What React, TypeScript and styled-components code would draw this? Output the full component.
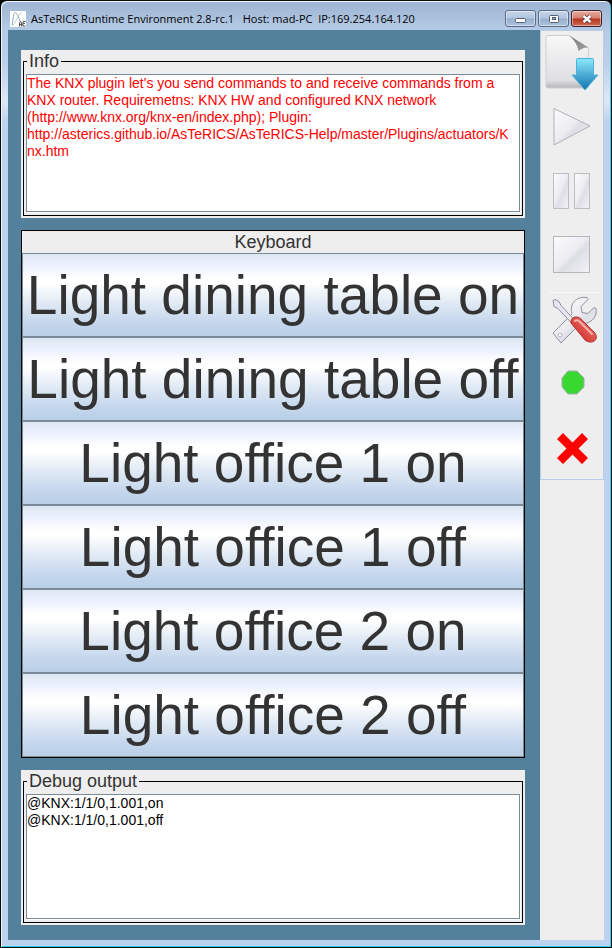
import React from "react";
import styled, { createGlobalStyle } from "styled-components";

const GlobalStyle = createGlobalStyle`
  *, *::before, *::after { box-sizing: border-box; }
  body { margin: 0; background: #000; font-family: "Liberation Sans", Arial, sans-serif; }
`;

const WindowFrame = styled.div`
  display: flex;
  flex-direction: column;
  min-height: 100vh;
  border: 1px solid #0a0a0a;
  border-radius: 7px 7px 0 0;
  background: linear-gradient(#9db4d2 0, #b5cbe6 30px, #b9cfea 60px, #dce8f6 100px, #bdd2ee 122px, #bdd2ee 100%);
  box-shadow: inset 1px 1px 0 #eef4fb, inset -1px -1px 0 #22d3ee;
  padding: 0 7px 7px;
`;

const TitleBar = styled.header`
  display: flex;
  align-items: center;
  height: 29px;
  padding: 6px 0 0 2px;
`;

const Title = styled.h1`
  flex: 1;
  margin: 0 0 0 5px;
  font: 400 11px/18px "Open Sans", "Noto Sans", sans-serif;
  color: #000;
  white-space: pre;
`;

const WindowControls = styled.div`
  display: flex;
  gap: 2px;
  margin-right: 2px;
`;

const WindowButton = styled.button<{ $close?: boolean }>`
  display: flex;
  align-items: center;
  justify-content: center;
  width: 31px;
  height: 17px;
  padding: 0;
  border: 1px solid ${(p) => (p.$close ? "#43202a" : "#5b6b87")};
  border-radius: 3px;
  background: ${(p) =>
    p.$close
      ? "linear-gradient(#e6aca0 0, #d6806f 48%, #b9341f 52%, #cc6a50 100%)"
      : "linear-gradient(#c5d5e9 0, #b2c5df 48%, #97aecd 52%, #adc4e0 100%)"};
  box-shadow: inset 0 0 0 1px rgba(255, 255, 255, 0.45);
`;

const Client = styled.div`
  display: flex;
  flex: 1;
`;

const Desktop = styled.main`
  display: flex;
  flex: 1;
  flex-direction: column;
  gap: 12px;
  min-width: 0;
  padding: 20px 15px 15px 13px;
  background: #53819b;
`;

const Panel = styled.section`
  padding: 1px 2px 2px;
  background: #eee;
`;

const Group = styled.fieldset`
  min-width: 0;
  margin: 0;
  padding: 2px 2px 3px;
  border: 1px solid #000;
`;

const Legend = styled.legend`
  margin-left: 1px;
  padding: 0 2px;
  font-size: 18px;
  line-height: 21px;
  color: #333;
`;

const Output = styled.textarea<{ $color: string; $height: number }>`
  display: block;
  width: 100%;
  height: ${(p) => p.$height}px;
  padding: 0 4px 0 0;
  border: 1px solid #7a8a99;
  outline: 0;
  resize: none;
  overflow: hidden;
  background: #fff;
  box-shadow: 1px 1px 0 #fff;
  font: 14px/17px "Liberation Sans", Arial, sans-serif;
  color: ${(p) => p.$color};
`;

const Keyboard = styled.section`
  display: flex;
  flex: 1;
  flex-direction: column;
  border: 1px solid #000;
  background: #eee;
`;

const KeyboardTitle = styled.h2`
  margin: 0;
  font-size: 18px;
  font-weight: 400;
  line-height: 22px;
  text-align: center;
  color: #333;
`;

const Key = styled.button`
  flex: 1;
  padding: 0;
  border: 1px solid #7a8a99;
  background: linear-gradient(#dde8f3 0, #edf2fd 16%, #fff 30%, #fff 36%, #dde8f3 62%, #c4d6ec 85%, #b8cfe5 100%);
  font: 55px/64px "Liberation Sans", Arial, sans-serif;
  white-space: nowrap;
  color: #333;
`;

const Sidebar = styled.aside`
  width: 64px;
  background: #eee;
`;

const Toolbar = styled.div`
  display: flex;
  flex-direction: column;
  border: 1px solid #b8cfe5;
`;

const ToolButton = styled.button`
  display: flex;
  align-items: center;
  justify-content: center;
  height: 64px;
  padding: 0;
  border: 0;
  background: transparent;
`;

const unbroken = (url: string) => url.replace(/-/g, "-\u2060");

const INFO =
  "The KNX plugin let's you send commands to and receive commands from a KNX router. Requiremetns: KNX HW and configured KNX network (http://www.knx.org/knx-en/index.php); Plugin: " +
  unbroken("http://asterics.github.io/AsTeRICS/AsTeRICS-Help/master/Plugins/actuators/Knx.htm");

const DEBUG = "@KNX:1/1/0,1.001,on\n@KNX:1/1/0,1.001,off";

const KEYS = [
  "Light dining table on",
  "Light dining table off",
  "Light office 1 on",
  "Light office 1 off",
  "Light office 2 on",
  "Light office 2 off",
];

const AppLogo = () => (
  <svg width="16" height="16" viewBox="0 0 16 16" aria-hidden="true">
    <rect width="16" height="16" fill="#fff" />
    <path d="M2 14.500C3 8 3.500 1.500 5.500 1.500S8.500 9 13 15" fill="none" stroke="#8fa6ac" />
    <path d="M3 14C7 11 7 4 12 1.500" fill="none" stroke="#b4d3dc" />
    <path d="M9.500 15.500v-4l1-1 1 1v4M9.500 13.500h2M15.500 10.500h-2.500v4.500h2.500M13 12.500h2" fill="none" stroke="#555" />
  </svg>
);

const ToolSvg = ({ children }: { children: React.ReactNode }) => (
  <svg width="62" height="64" viewBox="0 0 62 64" aria-hidden="true">
    <defs>
      <linearGradient id="silver" x1="0" y1="0" x2="1" y2="1">
        <stop offset="0" stopColor="#fcfcfe" />
        <stop offset=".48" stopColor="#ececf1" />
        <stop offset=".58" stopColor="#dedee6" />
        <stop offset="1" stopColor="#f2f2f6" />
      </linearGradient>
      <linearGradient id="page" x1="0" y1="0" x2="0" y2="1">
        <stop offset="0" stopColor="#f8f8f8" />
        <stop offset=".85" stopColor="#e0e0e3" />
        <stop offset="1" stopColor="#b4b4b8" />
      </linearGradient>
      <linearGradient id="fold" x1="0" y1="0" x2="1" y2="1">
        <stop offset="0" stopColor="#777" />
        <stop offset="1" stopColor="#a4a4a6" />
      </linearGradient>
      <linearGradient id="arrow" x1="0" y1="0" x2="0" y2="1">
        <stop offset="0" stopColor="#8be9fd" />
        <stop offset="1" stopColor="#1173ae" />
      </linearGradient>
      <linearGradient id="red" x1="0" y1="1" x2="1" y2="0">
        <stop offset="0" stopColor="#c91b1b" />
        <stop offset="1" stopColor="#f08578" />
      </linearGradient>
    </defs>
    {children}
  </svg>
);

const TOOLS: { label: string; icon: React.ReactNode }[] = [
  {
    label: "Open model",
    icon: (
      <>
        <path d="M7 4.500h21L47.500 17V55q0 2-2 2H7q-2 0-2-2V6.500q0-2 2-2z" fill="url(#page)" stroke="#d0d0d3" />
        <path d="M28 4.500L47.500 16.500Q42 16 37.500 20 36 11 28 4.500z" fill="url(#fold)" />
        <path d="M35.500 28.500q0-1 1-1h15q1 0 1 1V44H57L44 59 31 44h4.500z" fill="url(#arrow)" stroke="#4bb2da" />
      </>
    ),
  },
  { label: "Start", icon: <path d="M13 13.500v36.500L49 31z" fill="url(#silver)" stroke="#b2b2b7" /> },
  {
    label: "Pause",
    icon: (
      <>
        <rect x="12.500" y="14.500" width="15" height="35" fill="url(#silver)" stroke="#bdbdc3" />
        <rect x="33.500" y="14.500" width="15" height="35" fill="url(#silver)" stroke="#bdbdc3" />
      </>
    ),
  },
  { label: "Stop", icon: <rect x="12.500" y="13.500" width="36" height="36" fill="url(#silver)" stroke="#b5b5ba" /> },
  {
    label: "Options",
    icon: (
      <>
        <path d="M8 5.500h49" stroke="#f8f8f8" />
        <path
          d="M12 46L31 27C28 17 35 9 46 10.500l1 2-7 7 1 6 6 1 6-6 2 1C57 31 48 38 40 36L20 56z"
          fill="url(#silver)"
          stroke="#8f8f9e"
        />
        <circle cx="19" cy="48" r="2" fill="#fff" stroke="#b0b0ba" />
        <path d="M12 13.500l2-1 4 2 2 4 14 15-3 3-14-15-4-2z" fill="#e7e7f0" stroke="#8f8f9e" />
        <path d="M30 36c-1-6 6-8 10-4l12 12c8 7 0 15-8 9z" fill="url(#red)" stroke="#b52a2a" />
        <path d="M34 34q2-2 5 1l12 12" fill="none" stroke="#f5b0a8" strokeWidth="2" strokeLinecap="round" />
      </>
    ),
  },
  {
    label: "Status",
    icon: <path d="M27 20h9l7 7v9l-7 7h-9l-6-7v-9z" fill="#38d830" stroke="#a5adb0" />,
  },
  {
    label: "Exit",
    icon: <path d="M16 24l6-6 9.500 9.500L41 18l6 6-9.500 9.500L47 43l-6 6-9.500-9.500L22 49l-6-6 9.500-9.500z" fill="#fe0000" />,
  },
];

export default function App() {
  return (
    <>
      <GlobalStyle />
      <WindowFrame>
        <TitleBar>
          <AppLogo />
          <Title>{"AsTeRICS Runtime Environment 2.8-rc.1   Host: mad-PC  IP:169.254.164.120"}</Title>
          <WindowControls>
            <WindowButton aria-label="Minimize">
              <svg width="13" height="9" aria-hidden="true">
                <rect x="1.500" y="4.500" width="10" height="4" rx="1" fill="#fff" stroke="#555f70" />
              </svg>
            </WindowButton>
            <WindowButton aria-label="Maximize">
              <svg width="12" height="10" aria-hidden="true">
                <rect x="1.500" y="1.500" width="9" height="7" rx="1" fill="#fff" stroke="#555f70" />
                <rect x="4.500" y="3.500" width="3" height="2" fill="#9fb2ce" stroke="#555f70" />
              </svg>
            </WindowButton>
            <WindowButton $close aria-label="Close">
              <svg width="12" height="10" aria-hidden="true">
                <path d="M2.500 2l7 6M9.500 2l-7 6" stroke="#5a3a42" strokeWidth="4" />
                <path d="M2.500 2l7 6M9.500 2l-7 6" stroke="#fff" strokeWidth="2.500" />
              </svg>
            </WindowButton>
          </WindowControls>
        </TitleBar>
        <Client>
          <Desktop>
            <Panel>
              <Group>
                <Legend>Info</Legend>
                <Output aria-label="Info" readOnly $color="#f00" $height={138} value={INFO} />
              </Group>
            </Panel>
            <Keyboard>
              <KeyboardTitle>Keyboard</KeyboardTitle>
              {KEYS.map((key) => (
                <Key key={key}>{key}</Key>
              ))}
            </Keyboard>
            <Panel>
              <Group>
                <Legend>Debug output</Legend>
                <Output aria-label="Debug output" readOnly $color="#000" $height={125} value={DEBUG} />
              </Group>
            </Panel>
          </Desktop>
          <Sidebar>
            <Toolbar role="toolbar" aria-label="Model controls">
              {TOOLS.map((tool) => (
                <ToolButton key={tool.label} aria-label={tool.label}>
                  <ToolSvg>{tool.icon}</ToolSvg>
                </ToolButton>
              ))}
            </Toolbar>
          </Sidebar>
        </Client>
      </WindowFrame>
    </>
  );
}
